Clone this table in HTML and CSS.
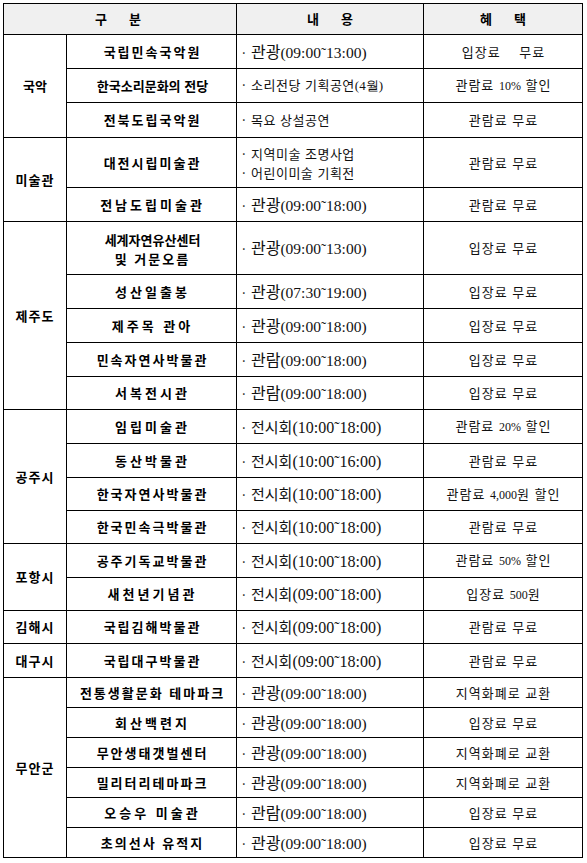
FILE: index.html
```html
<!DOCTYPE html>
<html lang="ko">
<head>
<meta charset="utf-8">
<title>문화 혜택 안내</title>
<link rel="stylesheet" href="styles.css">
</head>
<body>
<div class="sheet">
  <div class="c hd wide"><span>구<span class="gap"></span>분</span></div>
  <div class="c hd"><span>내<span class="gap"></span>용</span></div>
  <div class="c hd"><span>혜<span class="gap"></span>택</span></div>

  <div class="c grp s3 tight">국악</div>
  <div class="c nm">국립민속국악원</div>
  <div class="c ct"><span><span class="bul">·</span><span class="kr">관광</span><span class="num">(09:00˜13:00)</span></span></div>
  <div class="c bn"><span>입장료&nbsp;&nbsp;&nbsp; 무료</span></div>

  <div class="c nm ls0">한국소리문화의 전당</div>
  <div class="c ct sm"><span><span class="bul">·</span>소리전당 기획공연<span class="num small">(4월)</span></span></div>
  <div class="c bn"><span>관람료 <span class="num small">10%</span> 할인</span></div>

  <div class="c nm">전북도립국악원</div>
  <div class="c ct sm"><span><span class="bul">·</span>목요 상설공연</span></div>
  <div class="c bn"><span>관람료 무료</span></div>

  <div class="c grp s2">미술관</div>
  <div class="c nm">대전시립미술관</div>
  <div class="c ct sm multi"><div><span class="bul">·</span>지역미술 조명사업</div><div><span class="bul">·</span>어린이미술 기획전</div></div>
  <div class="c bn"><span>관람료 무료</span></div>

  <div class="c nm ls3">전남도립미술관</div>
  <div class="c ct"><span><span class="bul">·</span><span class="kr">관광</span><span class="num">(09:00˜18:00)</span></span></div>
  <div class="c bn"><span>관람료 무료</span></div>

  <div class="c grp s5">제주도</div>
  <div class="c nm ls0 two"><div>세계자연유산센터</div><div class="ls1">및 거문오름</div></div>
  <div class="c ct"><span><span class="bul">·</span><span class="kr">관광</span><span class="num">(09:00˜13:00)</span></span></div>
  <div class="c bn"><span>입장료 무료</span></div>

  <div class="c nm ls3">성산일출봉</div>
  <div class="c ct"><span><span class="bul">·</span><span class="kr">관광</span><span class="num">(07:30˜19:00)</span></span></div>
  <div class="c bn"><span>입장료 무료</span></div>

  <div class="c nm ls3">제주목 관아</div>
  <div class="c ct"><span><span class="bul">·</span><span class="kr">관광</span><span class="num">(09:00˜18:00)</span></span></div>
  <div class="c bn"><span>입장료 무료</span></div>

  <div class="c nm">민속자연사박물관</div>
  <div class="c ct"><span><span class="bul">·</span><span class="kr">관람</span><span class="num">(09:00˜18:00)</span></span></div>
  <div class="c bn"><span>입장료 무료</span></div>

  <div class="c nm ls3">서복전시관</div>
  <div class="c ct"><span><span class="bul">·</span><span class="kr">관람</span><span class="num">(09:00˜18:00)</span></span></div>
  <div class="c bn"><span>입장료 무료</span></div>

  <div class="c grp s4">공주시</div>
  <div class="c nm ls3">임립미술관</div>
  <div class="c ct lg"><span><span class="bul">·</span><span class="kr">전시회</span><span class="num">(10:00˜18:00)</span></span></div>
  <div class="c bn"><span>관람료 <span class="num small">20%</span> 할인</span></div>

  <div class="c nm ls3">동산박물관</div>
  <div class="c ct lg"><span><span class="bul">·</span><span class="kr">전시회</span><span class="num">(10:00˜16:00)</span></span></div>
  <div class="c bn"><span>관람료 무료</span></div>

  <div class="c nm">한국자연사박물관</div>
  <div class="c ct lg"><span><span class="bul">·</span><span class="kr">전시회</span><span class="num">(10:00˜18:00)</span></span></div>
  <div class="c bn"><span>관람료 <span class="num small">4,000</span>원 할인</span></div>

  <div class="c nm">한국민속극박물관</div>
  <div class="c ct lg"><span><span class="bul">·</span><span class="kr">전시회</span><span class="num">(10:00˜18:00)</span></span></div>
  <div class="c bn"><span>관람료 무료</span></div>

  <div class="c grp s2">포항시</div>
  <div class="c nm">공주기독교박물관</div>
  <div class="c ct lg"><span><span class="bul">·</span><span class="kr">전시회</span><span class="num">(10:00˜18:00)</span></span></div>
  <div class="c bn"><span>관람료 <span class="num small">50%</span> 할인</span></div>

  <div class="c nm ls3">새천년기념관</div>
  <div class="c ct lg"><span><span class="bul">·</span><span class="kr">전시회</span><span class="num">(09:00˜18:00)</span></span></div>
  <div class="c bn"><span>입장료 <span class="num small">500</span>원</span></div>

  <div class="c grp">김해시</div>
  <div class="c nm">국립김해박물관</div>
  <div class="c ct lg"><span><span class="bul">·</span><span class="kr">전시회</span><span class="num">(09:00˜18:00)</span></span></div>
  <div class="c bn"><span>관람료 무료</span></div>

  <div class="c grp">대구시</div>
  <div class="c nm">국립대구박물관</div>
  <div class="c ct lg"><span><span class="bul">·</span><span class="kr">전시회</span><span class="num">(09:00˜18:00)</span></span></div>
  <div class="c bn"><span>관람료 무료</span></div>

  <div class="c grp s6">무안군</div>
  <div class="c nm ls2">전통생활문화 테마파크</div>
  <div class="c ct"><span><span class="bul">·</span><span class="kr">관광</span><span class="num">(09:00˜18:00)</span></span></div>
  <div class="c bn"><span>지역화폐로 교환</span></div>

  <div class="c nm ls3">회산백련지</div>
  <div class="c ct"><span><span class="bul">·</span><span class="kr">관광</span><span class="num">(09:00˜18:00)</span></span></div>
  <div class="c bn"><span>입장료 무료</span></div>

  <div class="c nm">무안생태갯벌센터</div>
  <div class="c ct"><span><span class="bul">·</span><span class="kr">관광</span><span class="num">(09:00˜18:00)</span></span></div>
  <div class="c bn"><span>지역화폐로 교환</span></div>

  <div class="c nm">밀리터리테마파크</div>
  <div class="c ct"><span><span class="bul">·</span><span class="kr">관광</span><span class="num">(09:00˜18:00)</span></span></div>
  <div class="c bn"><span>지역화폐로 교환</span></div>

  <div class="c nm ls3">오승우 미술관</div>
  <div class="c ct"><span><span class="bul">·</span><span class="kr">관람</span><span class="num">(09:00˜18:00)</span></span></div>
  <div class="c bn"><span>입장료 무료</span></div>

  <div class="c nm">초의선사 유적지</div>
  <div class="c ct"><span><span class="bul">·</span><span class="kr">관광</span><span class="num">(09:00˜18:00)</span></span></div>
  <div class="c bn"><span>입장료 무료</span></div>
</div>
</body>
</html>
```

FILE: styles.css
```css
html, body {
  margin: 0;
  padding: 0;
  background: #fff;
}

body {
  font-family: "Noto Sans CJK KR", "Noto Sans", sans-serif;
  color: #000;
}

.sheet {
  display: grid;
  grid-template-columns: 63px 170px 187px 159px;
  grid-template-rows: 31px 34px 34px 35px 50px 34px 53px 34px 34px 34px 33px 34px 34px 33px 33px 34px 33px 33px 34px repeat(6, 30px);
  width: max-content;
  margin: 3px 0 0 3px;
  border-left: 1px solid #000;
  border-top: 1px solid #000;
}

.c {
  box-sizing: border-box;
  border-right: 1px solid #000;
  border-bottom: 1px solid #000;
  display: flex;
  align-items: center;
  justify-content: center;
  font-size: 13px;
  line-height: 16px;
  white-space: nowrap;
  overflow: hidden;
}

.hd {
  background: #f0f0f0;
  font-weight: 700;
}

.hd.wide {
  grid-column: span 2;
  padding-right: 4px;
}

.gap {
  display: inline-block;
  width: 22px;
}

.grp {
  grid-column: 1;
  font-weight: 700;
  letter-spacing: 1px;
}

.grp.tight {
  letter-spacing: 0;
}

.s2 { grid-row: span 2; }
.s3 { grid-row: span 3; }
.s4 { grid-row: span 4; }
.s5 { grid-row: span 5; }
.s6 { grid-row: span 6; }

.nm {
  font-weight: 700;
  letter-spacing: 2px;
  padding-left: 2px;
}

.nm.ls0 { letter-spacing: 0; }
.nm.ls2 { letter-spacing: 2px; }
.nm.ls3 { letter-spacing: 3px; }

.nm.two {
  flex-direction: column;
  line-height: 19px;
  padding-top: 1px;
}

.two .ls1 {
  letter-spacing: 2px;
}

.ct {
  justify-content: flex-start;
  padding-left: 4px;
  font-size: 16px;
  color: #111;
}

.ct.sm {
  font-size: 13px;
  letter-spacing: 0.5px;
}

.ct.multi {
  flex-direction: column;
  align-items: flex-start;
  justify-content: center;
  line-height: 19px;
  padding-top: 1px;
}

.bul {
  display: inline-block;
  width: 9px;
  font-size: 13px;
  text-align: left;
  padding-left: 1px;
}

.kr {
  font-weight: 400;
}

.ct.lg .kr {
  font-size: 15px;
}

.num {
  font-family: "Liberation Serif", "Times New Roman", serif;
  font-size: 15.5px;
  letter-spacing: 0;
}

.ct.lg .num {
  font-size: 16px;
}

.num.small {
  font-size: 12px;
}

.ct.sm .num.small {
  font-size: 13px;
}

.bn {
  letter-spacing: 1px;
  color: #111;
  padding-left: 1px;
}
```
